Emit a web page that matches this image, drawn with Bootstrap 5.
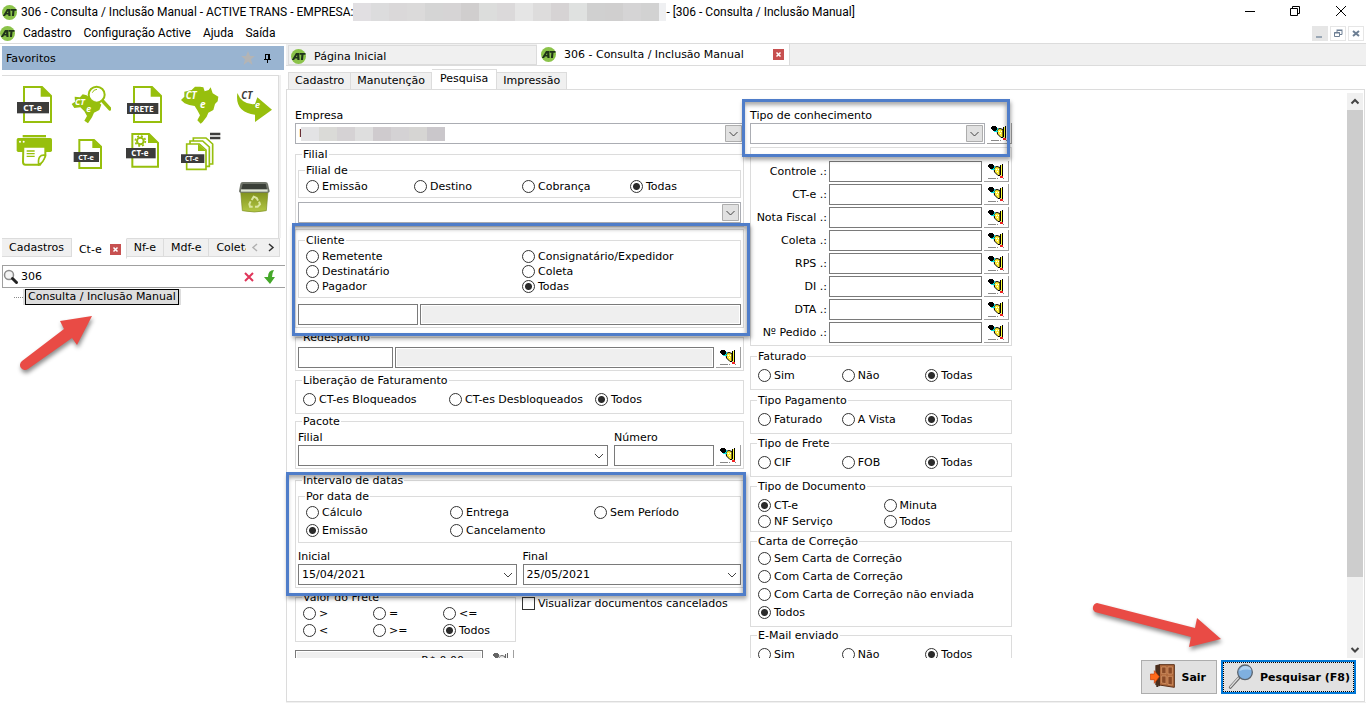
<!DOCTYPE html>
<html lang="pt-BR">
<head>
<meta charset="utf-8">
<meta name="viewport" content="width=device-width, initial-scale=1">
<title>306 - Consulta / Inclusão Manual - ACTIVE TRANS</title>
<link href="https://cdn.jsdelivr.net/npm/bootstrap@5.3.0/dist/css/bootstrap.min.css" rel="stylesheet">
<style>
:root{--line:#dcdcdc;--face:#f0f0f0;--mark:#4f7dc9;--ui:"DejaVu Sans",Verdana,sans-serif;--sys:Roboto,"Segoe UI",sans-serif}
body{font:11px/13px var(--ui);color:#000;background:#fff}
button,input,select{font:inherit;color:#000}
svg{display:block;flex:none}
.titlebar{font:12px/24px var(--sys);height:24px;padding-left:2px}
.menubar{font:12px/19px var(--sys);height:20px;border-bottom:1px solid var(--line)}
.menubar a{color:#000;text-decoration:none}
.edge{margin-right:2px}
.win{width:46px;height:20px;border:0;background:none;padding:0}
.child{width:16px;height:15px;border:1px solid #e6e6e6;background:#fff;padding:0}
.child.dim{background:#e6e6e6}
.mosaic{display:flex;height:18px}
.mosaic.fog{position:absolute;left:6px;top:4px;height:14px}
.mosaic i{width:18px}
.mosaic i.thin{width:7px}
.shrink0{min-height:0;min-width:0}
/* spacing and row steps shared by the form */
.mt1p{margin-top:1px}.mt2p{margin-top:2px}.mt3p{margin-top:3px}.mt5p{margin-top:5px}.mt6p{margin-top:6px}
.g2p{gap:2px}.g6p{gap:6px}
.grp.pb1p{padding-bottom:1px}.grp.pb2p{padding-bottom:2px}.grp.pb3p{padding-bottom:3px}.grp.pb4p{padding-bottom:4px}
.pt1p{padding-top:1px}.pt2p{padding-top:2px}.pt5p{padding-top:5px}
/* sidebar */
.side{width:286px;flex:none;padding:2px 0 0 2px}
.favbar{height:24px;background:#99b4d1;width:282px}
.favs{width:277px;height:163px;margin-top:5px;border-top:1px solid var(--line);border-right:1px solid var(--line);box-shadow:2px 0 0 var(--face);display:grid;grid-template-columns:repeat(5,37px);grid-auto-rows:40px;gap:7px 18px;padding:8px 0 0 14px;align-content:start}
.favs a{display:block}
.favs a.last{grid-column:5;grid-row:3}
.favs text{font-family:"Open Sans",sans-serif;font-weight:700;fill:#fff}
.favs text.dark{fill:#3c3c3b}
.stabs{width:278px;height:21px;align-items:flex-start}
.stabs button{height:19px;background:var(--face);border:1px solid var(--line);border-left:0;padding:0 7px;white-space:nowrap}
.stabs .on{height:21px;background:#fff;border-color:#fff var(--line) #fff;padding:2px 5px 0 7px}
.stabs .rest{width:0}
.closer{width:11px;height:11px;background:#c75050;color:#fff;flex:none}
.find{width:283px;height:23px;border:1px solid #a0a0a0;border-right:0;margin-top:6px}
.find input{border:0;background:none;padding:0;margin-left:2px;min-width:0;outline:0}
.find button{border:0;background:none;padding:0}
.tree{padding-top:1px}
.tree .dots{width:9px;border-top:1px dotted #888}
.tree .node{background:#ddd;padding:0 2px}
.tree a{display:block;border:1px solid #000;color:#000;text-decoration:none;line-height:14px;padding:0 2px;height:16px}
/* document tabs */
.dtabs{height:22px;background:var(--face);border-bottom:1px solid var(--line)}
.dtabs .tab{width:249px;background:var(--face);border:1px solid var(--line);height:20px;padding:2px 4px 0 2px;margin-left:2px}
.dtabs .tab.on{width:253px;height:22px;background:#fff;margin-left:0;border-width:1px 1px 0 0;padding:0 5px 0 4px}
.ptabs{height:23px;padding-left:2px}
.ptabs button{height:17px;background:var(--face);border:1px solid var(--line);border-width:1px 1px 0 0;padding:0 6px}
.ptabs button:first-child{border-left-width:1px}
.ptabs .on{height:21px;background:#fff;padding:0 8px 2px;margin-bottom:-1px}
.sheet{border:1px solid var(--line);margin-right:1px;min-height:0}
.strip{background:var(--face);height:1px}
.view{overflow-y:clip;overflow-x:visible;min-height:0;padding:19px 0 0 8px}
.cola{width:449px;flex:none}
.colb{width:262px;flex:none;margin-left:6px}
/* group boxes */
.grp{border:1px solid var(--line);padding:0 2px;margin-left:0;margin-right:0;min-width:0}
.grp>legend{float:none;width:auto;font-size:11px;line-height:13px;margin:0 0 0 4px;padding:0 1px}
.grp.client{padding-top:4px}
.opts{display:grid;padding-left:5px}
.n2{grid-template-columns:repeat(2,1fr)}.n3{grid-template-columns:repeat(3,1fr)}.n4{grid-template-columns:repeat(4,1fr)}
.h15{grid-auto-rows:15px}.h16{grid-auto-rows:16px}.h17{grid-auto-rows:17px}.h18{grid-auto-rows:18px}.h20{grid-auto-rows:20px}
.opts label,.chk{display:flex;align-items:center;gap:3px;white-space:nowrap}
.opts input{appearance:none;flex:none;width:13px;height:13px;margin:0;border:1px solid #333;border-radius:50%;background:#fff}
.opts input:checked{background:radial-gradient(circle,#2b2b2b 3px,#fff 4px)}
.chk input{appearance:none;width:13px;height:13px;margin:0;border:1px solid #333;background:#fff}
.box{height:21px;border:1px solid #7a7a7a;border-radius:0;background:#fff;padding:0 3px;min-width:0;display:block}
.box.off{background:#efefef;box-shadow:inset 0 0 0 1px #fff}
.box.code{width:120px}.box.code-s{width:95px}
.box.money{width:188px;padding-right:18px}
.numcol{width:100px}
.freight{width:221px}
.drop{appearance:none;background:#fff url("data:image/svg+xml,%3Csvg xmlns='http://www.w3.org/2000/svg' width='16' height='17'%3E%3Cpath d='M4 7l4 4 4-4' fill='none' stroke='%23444'/%3E%3C/svg%3E") no-repeat right 0 center}
.drop.btnd{border-color:#abadb3;background-position:right 1px center;background-image:url("data:image/svg+xml,%3Csvg xmlns='http://www.w3.org/2000/svg' width='17' height='17'%3E%3Cpath d='M.5.5h16v16H.5z' fill='%23e1e1e1' stroke='%23adadad'/%3E%3Cpath d='M4.5 7l4 4 4-4' fill='none' stroke='%23444'/%3E%3C/svg%3E")}
.wipe{width:25px;height:21px;border:solid #a0a0a0;border-width:0 1px 1px 0;background:#fff;padding:0 0 0 4px;flex:none}
.wipe:disabled svg{filter:grayscale(1);opacity:.6}
.rows{display:grid;grid-template-columns:74px 1fr 25px;gap:2px;padding:13px 0 2px}
.rows label{text-align:right;align-self:center;white-space:nowrap}
.mark-wrap{position:relative}
.ring{position:absolute;border:3px solid var(--mark);pointer-events:none;box-shadow:1px 3px 4px rgba(0,0,0,.35),inset -1px 3px 4px rgba(0,0,0,.35);z-index:2}
.ring.r1{inset:-10px 2px -13px -8px}
.ring.r2{inset:-7px -7px -9px -4px}
.ring.r3{inset:-2px -2px -8px -9px}
.sb{width:16px;margin:3px 1px 0 0;background:var(--face)}
.sb svg{height:17px}
.sb .thumb{background:#cdcdcd;height:88%}
.foot{padding:2px 8px 7px;position:relative}
.cmd{height:34px;border:1px solid #adadad;background:#e1e1e1;font-weight:700;padding:0 10px 0 8px;white-space:nowrap;min-width:76px}
.cmd.main{border:2px solid #0078d7;outline:1px dotted #000;outline-offset:-3px;padding:0 4px;min-width:135px}
.arrow{position:absolute;pointer-events:none;filter:drop-shadow(1px 3px 2px rgba(0,0,0,.45));z-index:3}
.a1{left:16px;top:267px}
.a2{right:136px;bottom:51px}
</style>
</head>
<body>
<svg width="0" height="0" class="position-absolute" aria-hidden="true">
  <defs>
    <symbol id="logo" viewBox="0 0 15 15"><circle cx="7.500" cy="7.500" r="7.500" fill="#8bc34a"/><path fill-rule="evenodd" d="M.8 11L5 4h3.200l.4 7H6.400l-.1-1.500H4L3.100 11zM4.900 8h1.300l-.1-2z" fill="#20331a"/><path d="M8.500 4h6v1.800h-2L12 11H9.900l.5-5.200H8.500z" fill="#20331a"/></symbol>
    <symbol id="wipe" viewBox="0 0 16 16"><path d="M6 4.500L9 3.500l3 1v8H10L6.500 9z" fill="#ffee33" stroke="#000" stroke-width="1"/><g shape-rendering="crispEdges"><path d="M1 1h4v1h1v3H5v1H2V5H1V4H0V2h1z" fill="#000"/><path d="M6 3h1v2H6v1H5v1H3V6h2V5h1zM4 6h3v1H4z" fill="#0dd"/><path d="M8 6h1v1H8zM10 6h1v1h-1zM9 8h1v1H9z" fill="#fff"/><path d="M14 1h1v12h-1zM12 2h1v10h-1z" fill="#000"/><path d="M13 2h1v11h-1z" fill="#ff3"/><path d="M12 13h3v2h-3z" fill="#e22"/><path d="M0 15h8v1H0zM9 15h1v1H9zM15 15h1v1h-1z" fill="#888"/></g></symbol>
    <symbol id="x" viewBox="0 0 11 11"><path d="M3.500 3.500l4 4M7.500 3.500l-4 4" stroke="#fff" stroke-width="1.500"/></symbol>
    <linearGradient id="bin" x1="0" y1="0" x2="0" y2="1"><stop stop-color="#7f8f1d"/><stop offset="1" stop-color="#b3c845"/></linearGradient>
  </defs>
</svg>
<div class="d-flex flex-column vh-100 overflow-hidden">
  <header class="titlebar d-flex align-items-center">
    <svg class="me-1" width="15" height="15"><use href="#logo"/></svg>
    <span class="text-nowrap">306 - Consulta / Inclusão Manual - ACTIVE TRANS - EMPRESA:</span>
    <span class="mosaic" id="firm"></span>
    <span class="text-nowrap">- [306 - Consulta / Inclusão Manual]</span>
    <div class="ms-auto d-flex edge">
      <button class="win" aria-label="Minimizar"><svg width="46" height="20"><path d="M19 9.500h10" stroke="#000"/></svg></button>
      <button class="win" aria-label="Restaurar"><svg width="46" height="20" fill="none" stroke="#000"><path d="M18.500 6.500h7v7h-7zM20.500 6.500v-2h7v7h-2"/></svg></button>
      <button class="win" aria-label="Fechar"><svg width="46" height="20" stroke="#000"><path d="M18 4l10 10M28 4L18 14"/></svg></button>
    </div>
  </header>
  <nav class="menubar d-flex align-items-center">
    <svg width="15" height="15"><use href="#logo"/></svg>
    <div class="d-flex gap-2 ps-2"><a class="me-1" href="#">Cadastro</a><a class="me-1" href="#">Configuração Active</a><a class="me-1" href="#">Ajuda</a><a href="#">Saída</a></div>
    <div class="ms-auto d-flex g2p edge">
      <button class="child dim" aria-label="Minimizar documento"><svg width="14" height="13"><path d="M3 9h6v2H3z" fill="#9aa7b5"/></svg></button>
      <button class="child" aria-label="Restaurar documento"><svg width="14" height="13" fill="none" stroke="#6d7f94"><path d="M3.500 5.500h5v4h-5zM3 6h6M6 5V3.500h5v4H9M5.500 3h6"/></svg></button>
      <button class="child" aria-label="Fechar documento"><svg width="14" height="13"><path d="M4 4l6 5M10 4L4 9" stroke="#6d7f94" stroke-width="2"/></svg></button>
    </div>
  </nav>
  <div class="d-flex flex-grow-1 shrink0">
    <aside class="side position-relative">
      <div class="favbar d-flex align-items-center px-1">
        <span>Favoritos</span>
        <svg class="ms-auto me-2" width="14" height="14" viewBox="0 0 14 14"><path d="M7 0l2 5h5l-4 3.200L11.500 14 7 10.500 2.500 14 4 8.200 0 5h5z" fill="#b4b4b4"/></svg>
        <svg class="me-2" width="9" height="11"><path d="M2.500 1v5M2 1.500h4M5.500 1v5M6.500 1v5M1 6.500h7M4.500 7v3" stroke="#000" fill="none"/></svg>
      </div>
      <div class="favs">
        <a href="#" aria-label="CT-e"><svg width="37" height="40" viewBox="48 252 111 120"><path d="M72 261h54l27 27v78H72z" fill="#fff" stroke="#97bf0d" stroke-width="6"/><path d="M122 258v32h33z" fill="#97bf0d"/><path d="M51 306h96v34H51z" fill="#3c3c3b"/><text x="70" y="333" font-size="26">CT-e</text></svg></a>
        <a href="#" aria-label="Pesquisar CT-e"><svg width="40" height="40" viewBox="208 252 120 120"><path d="M210 312l10-7-1-15 16 2 8-9 12 3 10 8 26 12 8 8-6 16-16 8-6 14-12 18-11-8 8-14-8-14-12-12-18 2z" fill="#97bf0d"/><circle cx="285" cy="284" r="24" fill="#fff" fill-opacity=".9" stroke="#97bf0d" stroke-width="6"/><path d="M272 278q4-10 14-10" fill="none" stroke="#97bf0d" stroke-width="3"/><path d="M303 303l22 24" stroke="#97bf0d" stroke-width="10" stroke-linecap="round"/><text x="220" y="314" font-size="26" font-style="italic">CT</text><text x="254" y="337" font-size="26" font-style="italic">e</text></svg></a>
        <a href="#" aria-label="Frete"><svg width="37" height="40" viewBox="378 252 111 120"><path d="M402 261h54l27 27v78h-81z" fill="#fff" stroke="#97bf0d" stroke-width="6"/><path d="M452 258v32h33z" fill="#97bf0d"/><path d="M381 309h94v33h-94z" fill="#3c3c3b"/><text x="388" y="335" font-size="25">FRETE</text></svg></a>
        <a href="#" aria-label="CT-e Brasil"><svg width="38" height="40" viewBox="543 252 114 120"><path d="M543 300l10-10v-15l22-5 10-10 15 0 10 2 4 12 12-4 6-8 6 18 17 10-2 14-8 8-5 18-15 8-5 12-12 16-6 5-10-10 8-15-8-15-8-13-16-3-14-5z" fill="#97bf0d"/><text x="557" y="297" font-size="29" font-style="italic">CT</text><text x="600" y="325" font-size="30" font-style="italic">e</text></svg></a>
        <a href="#" aria-label="Enviar CT-e"><svg width="37" height="40" viewBox="708 252 111 120"><path d="M712 279q-8 58 53 65v22l51-37-44-37-7 20q-38 4-53-33z" fill="#97bf0d"/><text class="dark" x="724" y="298" font-size="29" font-style="italic">CT</text><text x="765" y="325" font-size="27" font-style="italic">e</text></svg></a>
        <a href="#" aria-label="Imprimir"><svg width="37" height="40" viewBox="48 393 111 120"><path d="M68 405h70v7H68z" fill="#97bf0d"/><rect x="50" y="414" width="106" height="42" rx="5" fill="#97bf0d"/><circle cx="60" cy="425" r="3" fill="#fff"/><circle cx="71" cy="425" r="3" fill="#fff"/><path d="M70 440h66v28l-16 26H76q-7 0-7-8z" fill="#fff" stroke="#97bf0d" stroke-width="6"/><path d="M136 466q-24-4-20 28 16-8 20-28z" fill="#fff" stroke="#97bf0d" stroke-width="5"/><path d="M80 453h24M80 461h24M80 469h24" stroke="#97bf0d" stroke-width="4"/></svg></a>
        <a href="#" aria-label="CT-e documento"><svg width="37" height="40" viewBox="208 393 111 120"><path d="M233 420h44l21 20v64h-65z" fill="#fff" stroke="#97bf0d" stroke-width="6"/><path d="M272 418v26h28z" fill="#97bf0d"/><path d="M216 456h76v30h-76z" fill="#3c3c3b"/><text x="230" y="479" font-size="22">CT-e</text></svg></a>
        <a href="#" aria-label="Configurar CT-e"><svg width="37" height="40" viewBox="378 393 111 120"><path d="M397 402h50l27 27v71h-77z" fill="#fff" stroke="#97bf0d" stroke-width="6"/><path d="M444 399v30h32z" fill="#97bf0d"/><circle cx="421" cy="423" r="10" fill="#fff" stroke="#97bf0d" stroke-width="6"/><circle cx="421" cy="423" r="15" fill="none" stroke="#97bf0d" stroke-width="5" stroke-dasharray="6 5.780"/><path d="M378 444h89v31h-89z" fill="#3c3c3b"/><text x="394" y="469" font-size="24">CT-e</text></svg></a>
        <a href="#" aria-label="Lote de CT-e"><svg width="40" height="40" viewBox="537 393 120 120"><g fill="#fff" stroke="#97bf0d" stroke-width="5"><path d="M574 414h38l20 18v60h-58z"/><path d="M564 423h38l20 18v58h-58z"/><path d="M554 432h38l20 18v58h-58z"/></g><path d="M588 431v22h24z" fill="#97bf0d"/><path d="M537 463h70v26h-70zM624 398h31v8h-31zM624 410h31v8h-31z" fill="#3c3c3b"/><text x="549" y="483" font-size="19">CT-e</text></svg></a>
        <a class="last" href="#" aria-label="Lixeira"><svg width="37" height="40" viewBox="708 534 111 120"><path d="M722 574h82l-5 58q-36 8-72 0z" fill="url(#bin)" stroke="#7b8d26" stroke-width="2"/><path d="M728 546h68q7 0 8 6l5 22q0 4-5 4h-82q-5 0-5-4l4-22q1-6 7-6z" fill="#70756b"/><path d="M728 552h69l5 20h-79z" fill="#3a3f38"/><path d="M723 568h80v7h-80z" fill="#dfe5d5"/><g fill="none" stroke="#dbe6a0" stroke-width="6"><path d="M755 600l6-10 9 4 4 8M777 605l3 8-7 7h-8M758 620h-8l-2-8 4-8"/></g></svg></a>
      </div>
      <div class="stabs d-flex">
        <button>Cadastros</button><button class="on d-flex align-items-center gap-2">Ct-e <svg class="closer"><use href="#x"/></svg></button><button>Nf-e</button><button>Mdf-e</button><button class="rest flex-fill overflow-hidden text-start border-end-0 pe-0">Coleta</button>
        <button class="p-0" aria-label="Rolar abas"><svg width="33" height="17" fill="none" stroke-width="1.500"><path d="M11 5L7 8.500l4 3.500" stroke="#b0b0b0"/><path d="M23 5l4 3.500-4 3.500" stroke="#333"/></svg></button>
      </div>
      <div class="find d-flex align-items-center">
        <svg width="16" height="18"><circle cx="6" cy="7" r="4.500" fill="#f4f4f4" stroke="#8c8c8c" stroke-width="1.500"/><path d="M9.500 10.500l4 4" stroke="#222" stroke-width="3" stroke-linecap="round"/></svg>
        <input class="flex-fill" type="text" value="306" aria-label="Pesquisar menu">
        <button aria-label="Limpar"><svg width="12" height="12"><path d="M2 2l8 8M10 2l-8 8" stroke="#e0355a" stroke-width="2"/></svg></button>
        <button class="ms-2 me-2" aria-label="Próximo"><svg width="14" height="16" viewBox="0 0 14 16"><path d="M11 1q-6 0-6 7H1l6 7 5-7H9q0-4 2-7z" fill="#45a82a"/></svg></button>
      </div>
      <div class="tree d-flex align-items-center ps-2 ms-1"><span class="dots"></span><div class="node"><a href="#">Consulta / Inclusão Manual</a></div></div>
      <svg class="arrow a1" width="80" height="60" viewBox="16 311 80 60"><path d="M22 361L64 329 60 321 92 316 77 345 72 338 28 369A5 5 0 0 1 22 361z" fill="#e94b45"/></svg>
    </aside>
    <main class="flex-fill d-flex flex-column shrink0">
      <div class="dtabs d-flex align-items-end">
        <button class="tab d-flex align-items-center"><svg width="15" height="15"><use href="#logo"/></svg><span class="ms-2">Página Inicial</span></button>
        <button class="tab on d-flex align-items-center"><svg width="15" height="15"><use href="#logo"/></svg><span class="ms-2">306 - Consulta / Inclusão Manual</span><svg class="closer ms-auto"><use href="#x"/></svg></button>
      </div>
      <div class="ptabs d-flex align-items-end"><button>Cadastro</button><button>Manutenção</button><button class="on">Pesquisa</button><button>Impressão</button></div>
      <div class="sheet flex-fill d-flex flex-column">
        <div class="d-flex flex-fill shrink0">
          <form class="view flex-fill d-flex align-items-start">
            <div class="cola">
              <label for="emp" class="d-block">Empresa</label>
              <div class="position-relative mt1p"><select id="emp" class="box drop btnd w-100"><option>I</option></select><span class="mosaic fog" id="firm2"></span></div>
              <fieldset class="grp mt-1 pb3p"><legend>Filial</legend>
                <fieldset class="grp mt3p"><legend>Filial de</legend><div class="opts n4 h20"><label><input type="radio" name="fd">Emissão</label><label><input type="radio" name="fd">Destino</label><label><input type="radio" name="fd">Cobrança</label><label><input type="radio" name="fd" checked>Todas</label></div></fieldset>
                <select class="box drop btnd w-100 mt-1" aria-label="Filial"><option></option></select>
              </fieldset>
              <div class="grp client mark-wrap mt2p pb2p">
                <fieldset class="grp pb3p"><legend>Cliente</legend><div class="opts n2 h15 pt2p"><label><input type="radio" name="cl">Remetente</label><label><input type="radio" name="cl">Consignatário/Expedidor</label><label><input type="radio" name="cl">Destinatário</label><label><input type="radio" name="cl">Coleta</label><label><input type="radio" name="cl">Pagador</label><label><input type="radio" name="cl" checked>Todas</label></div></fieldset>
                <div class="d-flex g2p mt6p"><input class="box code" aria-label="Código do cliente"><input class="box off flex-fill" readonly aria-label="Nome do cliente"></div>
                <div class="ring r2"></div>
              </div>
              <fieldset class="grp mt3p pb2p"><legend>Redespacho</legend><div class="d-flex g2p mt3p"><input class="box code-s" aria-label="Código do redespacho"><input class="box off flex-fill" readonly aria-label="Nome do redespacho"><button type="button" class="wipe" aria-label="Limpar"><svg width="16" height="16"><use href="#wipe"/></svg></button></div></fieldset>
              <fieldset class="grp mt3p pb3p"><legend>Liberação de Faturamento</legend><div class="opts n3 h20 mt3p"><label><input type="radio" name="lf">CT-es Bloqueados</label><label><input type="radio" name="lf">CT-es Desbloqueados</label><label><input type="radio" name="lf" checked>Todos</label></div></fieldset>
              <fieldset class="grp mt1p pb2p"><legend>Pacote</legend><div class="d-flex align-items-end g2p mt3p"><div class="flex-fill me-1"><label for="pf" class="d-block">Filial</label><select id="pf" class="box drop w-100 mt1p"><option></option></select></div><div class="numcol"><label for="pn" class="d-block">Número</label><input id="pn" class="box w-100 mt1p"></div><button type="button" class="wipe" aria-label="Limpar"><svg width="16" height="16"><use href="#wipe"/></svg></button></div></fieldset>
              <div class="mark-wrap mt5p"><fieldset class="grp pb2p"><legend>Intervalo de datas</legend>
                <fieldset class="grp mt3p pb2p"><legend>Por data de</legend><div class="opts n3 h18 pt1p"><label><input type="radio" name="pd">Cálculo</label><label><input type="radio" name="pd">Entrega</label><label><input type="radio" name="pd">Sem Período</label><label><input type="radio" name="pd" checked>Emissão</label><label><input type="radio" name="pd">Cancelamento</label></div></fieldset>
                <div class="d-flex g6p mt6p pt1p"><div class="flex-fill"><label for="di" class="d-block">Inicial</label><select id="di" class="box drop w-100 mt1p"><option>15/04/2021</option></select></div><div class="flex-fill"><label for="df" class="d-block">Final</label><select id="df" class="box drop w-100 mt1p"><option>25/05/2021</option></select></div></div>
                </fieldset><div class="ring r3"></div></div>
              <div class="d-flex align-items-start g6p mt3p"><fieldset class="grp freight pb2p"><legend>Valor do Frete</legend><div class="opts n3 h17 pt1p"><label><input type="radio" name="vf">&gt;</label><label><input type="radio" name="vf">=</label><label><input type="radio" name="vf">&lt;=</label><label><input type="radio" name="vf">&lt;</label><label><input type="radio" name="vf">&gt;=</label><label><input type="radio" name="vf" checked>Todos</label></div></fieldset><label class="chk mt6p"><input type="checkbox">Visualizar documentos cancelados</label></div>
              <div class="d-flex mt-2 g6p"><input class="box off money text-end" value="R$ 0,00" readonly aria-label="Valor"><button type="button" class="wipe" aria-label="Limpar" disabled><svg width="16" height="16"><use href="#wipe"/></svg></button></div>
            </div>
            <div class="colb">
              <div class="mark-wrap"><label for="tc" class="d-block">Tipo de conhecimento</label><div class="d-flex g2p mt1p"><select id="tc" class="box drop btnd flex-fill"><option></option></select><button type="button" class="wipe" aria-label="Limpar"><svg width="16" height="16"><use href="#wipe"/></svg></button></div><div class="ring r1"></div></div>
              <div class="grp mt3p"><div class="rows" id="rows"></div></div>
              <fieldset class="grp mt-1 pb3p"><legend>Faturado</legend><div class="opts n3 h20 mt3p"><label><input type="radio" name="fa">Sim</label><label><input type="radio" name="fa">Não</label><label><input type="radio" name="fa" checked>Todas</label></div></fieldset>
              <fieldset class="grp mt-1 pb3p"><legend>Tipo Pagamento</legend><div class="opts n3 h20 mt3p"><label><input type="radio" name="tp">Faturado</label><label><input type="radio" name="tp">A Vista</label><label><input type="radio" name="tp" checked>Todas</label></div></fieldset>
              <fieldset class="grp mt3p pb3p"><legend>Tipo de Frete</legend><div class="opts n3 h20 mt3p"><label><input type="radio" name="tf">CIF</label><label><input type="radio" name="tf">FOB</label><label><input type="radio" name="tf" checked>Todas</label></div></fieldset>
              <fieldset class="grp mt3p pb1p"><legend>Tipo de Documento</legend><div class="opts n2 h16 pt5p"><label><input type="radio" name="td" checked>CT-e</label><label><input type="radio" name="td">Minuta</label><label><input type="radio" name="td">NF Serviço</label><label><input type="radio" name="td">Todos</label></div></fieldset>
              <fieldset class="grp mt3p pb4p"><legend>Carta de Correção</legend><div class="opts h18 pt2p"><label><input type="radio" name="cc">Sem Carta de Correção</label><label><input type="radio" name="cc">Com Carta de Correção</label><label><input type="radio" name="cc">Com Carta de Correção não enviada</label><label><input type="radio" name="cc" checked>Todos</label></div></fieldset>
              <fieldset class="grp mt2p pb3p"><legend>E-Mail enviado</legend><div class="opts n3 h20 mt3p"><label><input type="radio" name="em">Sim</label><label><input type="radio" name="em">Não</label><label><input type="radio" name="em" checked>Todos</label></div></fieldset>
            </div>
          </form>
          <div class="sb d-flex flex-column"><svg width="16" height="17"><path d="M4.500 10.500L8 7l3.500 3.500" fill="none" stroke="#444" stroke-width="2"/></svg><div class="flex-fill"><div class="thumb"></div></div><svg width="16" height="17"><path d="M4.500 7L8 10.500 11.500 7" fill="none" stroke="#444" stroke-width="2"/></svg></div>
        </div>
        <div class="foot d-flex justify-content-end gap-1">
          <button class="cmd d-flex align-items-center"><svg width="28" height="26" viewBox="242 313 84 78"><path d="M261 318h10l-4 64h-6z" fill="#3b2a20"/><path d="M270 315h45v68l-45-7z" fill="#b06a3e" stroke="#5a2f17" stroke-width="3"/><path d="M258 317l14-3v66l-14-4z" fill="#4a2d1c"/><path d="M277 322h13v20h-13zM296 322h13v21h-13zM277 349h13v23l-13-2zM296 350h13v26l-13-2z" fill="#8a4a27" stroke="#e0a070" stroke-width="2"/><path d="M243 343h12v-10l15 18-15 20v-11h-12z" fill="#ff6a1a" stroke="#c63a05" stroke-width="2"/></svg><span class="ms-auto">Sair</span></button>
          <button class="cmd main d-flex align-items-center"><svg width="28" height="28" viewBox="462 310 84 84"><path d="M472 383l26-29" stroke="#666" stroke-width="9" stroke-linecap="round"/><path d="M472 382l24-27" stroke="#ddd" stroke-width="4" stroke-linecap="round"/><circle cx="516" cy="338" r="22" fill="#7fb0e0" stroke="#5d6670" stroke-width="4"/><path d="M499 334q5-16 20-15 14 2 16 12-18-4-36 3z" fill="#b5d3ef"/></svg><span class="ms-auto">Pesquisar (F8)</span></button>
          <svg class="arrow a2" width="140" height="52" viewBox="1088 598 140 52"><path d="M1097 603L1195 628 1197 618 1221 639 1189 647 1191 637 1095 612A5 5 0 0 1 1097 603z" fill="#e94b45"/></svg>
        </div>
      </div>
      <div class="strip"></div>
    </main>
  </div>
</div>
<script>
// Search-by-number rows: label, text box and clear button
document.getElementById('rows').innerHTML = ['Controle','CT-e','Nota Fiscal','Coleta','RPS','DI','DTA','Nº Pedido'].map((t, i) =>
  `<label for="n${i}">${t} .:</label><input id="n${i}" class="box w-100"><button type="button" class="wipe" aria-label="Limpar ${t}"><svg width="16" height="16"><use href="#wipe"/></svg></button>`).join('');
// Masked company names, drawn as a strip of grey cells
const mask = (id, cells) => document.getElementById(id).innerHTML = cells.map(c => `<i style="background:#${c}"></i>`).join('');
mask('firm', ['e1dfe2','dcdcdd','dad8d9','dbdada','d5d5d5','d6d4d5','d0cece','dcdddc','dbd9da','e5e5e5','dddcdc','d6d3d4','dfe1e0','d0d0d0','d0cfcf','d5d4d5','d2d2d2','eff0f2']);
document.getElementById('firm').lastElementChild.className = 'thin';
mask('firm2', ['e3e3e5','dadad7','d5d2d4','dedede','cfcbce','d4d2d4','d6d5d3','cac7cb']);
</script>
<script src="https://cdn.jsdelivr.net/npm/bootstrap@5.3.0/dist/js/bootstrap.bundle.min.js"></script>
</body>
</html>
